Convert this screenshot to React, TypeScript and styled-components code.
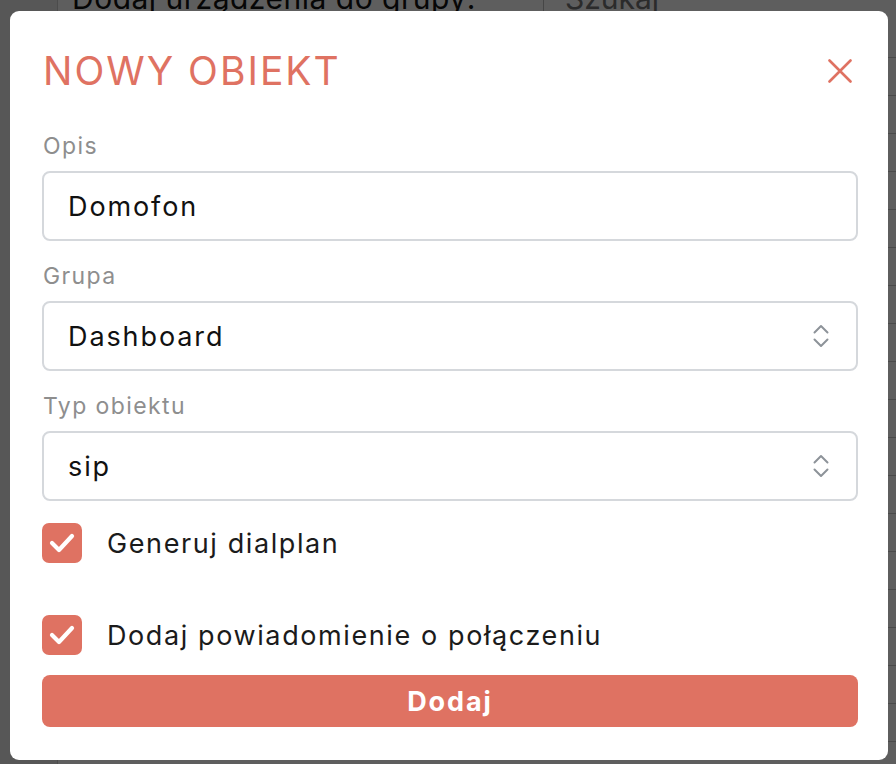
import React from "react";
import styled, { createGlobalStyle } from "styled-components";

const coral = "#df7262";

const GlobalStyle = createGlobalStyle`
  html, body {
    margin: 0;
    padding: 0;
    background: #ffffff;
    font-family: "Inter", "Noto Sans", sans-serif;
    overflow: hidden;
  }

  * {
    box-sizing: border-box;
  }
`;

const Page = styled.div`
  display: flex;
  height: 764px;
  width: 896px;
`;

const Sidebar = styled.div`
  background-color: #ededed;
  border-right: 1px solid #cfcfcf;
  flex: 0 0 58px;
`;

const Main = styled.div`
  display: flex;
  flex: 1;
  flex-direction: column;
`;

const TopBar = styled.div`
  align-items: center;
  display: flex;
  height: 44px;
  margin-top: -24px;
  padding-left: 14px;
`;

const Heading = styled.h2`
  color: #111111;
  font-size: 30px;
  font-weight: 400;
  letter-spacing: 0.5px;
  margin: 0;
  width: 471px;
`;

const Search = styled.input`
  border: none;
  border-left: 1px solid #bdbdbd;
  color: #9a9a9a;
  font-family: inherit;
  font-size: 30px;
  height: 44px;
  padding-left: 21px;
  width: 300px;
`;

const Table = styled.div`
  display: flex;
  flex-direction: column;
`;

const TableRow = styled.div`
  border-bottom: 1px solid #c9c9c9;
  height: 38px;
`;

const Overlay = styled.div`
  background-color: rgba(0, 0, 0, 0.63);
  inset: 0;
  position: fixed;
`;

const Modal = styled.div`
  background-color: #ffffff;
  border-radius: 9px;
  display: flex;
  flex-direction: column;
  margin: 11px 0 0 10px;
  padding: 32px 30px 33px 32px;
  width: 878px;
`;

const Header = styled.div`
  align-items: center;
  display: flex;
  height: 55px;
  justify-content: space-between;
`;

const Title = styled.h1`
  color: ${coral};
  font-size: 39px;
  font-weight: 400;
  letter-spacing: 2px;
  margin: 0 0 0 1px;
`;

const CloseButton = styled.button`
  align-items: center;
  background: none;
  border: none;
  cursor: pointer;
  display: flex;
  height: 29px;
  justify-content: center;
  margin-right: 4px;
  padding: 0;
  width: 29px;
`;

const Fields = styled.div`
  display: flex;
  flex-direction: column;
  gap: 20px;
  margin-top: 33px;
`;

const Field = styled.label`
  display: flex;
  flex-direction: column;
  gap: 10px;
`;

const FieldLabel = styled.span`
  color: #8e8e8e;
  font-size: 23px;
  letter-spacing: 1.4px;
  line-height: 30px;
  padding-left: 1px;
`;

const TextInput = styled.input`
  border: 2px solid #d5d8dc;
  border-radius: 8px;
  color: #111111;
  font-family: inherit;
  font-size: 27px;
  height: 70px;
  letter-spacing: 1.9px;
  outline: none;
  padding: 0 24px;
  width: 100%;
`;

const SelectBox = styled.div`
  align-items: center;
  border: 2px solid #d5d8dc;
  border-radius: 8px;
  display: flex;
  height: 70px;
  padding: 0 27px 0 24px;
`;

const NativeSelect = styled.select`
  appearance: none;
  background: transparent;
  border: none;
  color: #111111;
  flex: 1;
  font-family: inherit;
  font-size: 27px;
  letter-spacing: 1.9px;
  outline: none;
  padding: 0;
`;

const Checks = styled.div`
  display: flex;
  flex-direction: column;
  gap: 52px;
  margin-top: 22px;
`;

const CheckRow = styled.label`
  align-items: center;
  display: flex;
  gap: 25px;
  height: 40px;
`;

const CheckBox = styled.span<{ checked: boolean }>`
  align-items: center;
  background-color: ${props => (props.checked ? coral : "#ffffff")};
  border: ${props => (props.checked ? "none" : "2px solid #d5d8dc")};
  border-radius: 7px;
  display: flex;
  flex: 0 0 40px;
  height: 40px;
  justify-content: center;
`;

const CheckText = styled.span`
  color: #1b1b1b;
  font-size: 27px;
  letter-spacing: 1.6px;
`;

const SubmitButton = styled.button`
  background-color: ${coral};
  border: none;
  border-radius: 8px;
  color: #ffffff;
  cursor: pointer;
  font-family: inherit;
  font-size: 27px;
  font-weight: 700;
  height: 52px;
  letter-spacing: 1.9px;
  margin-top: 20px;
  width: 100%;
`;

const CloseIcon = () => (
  <svg width="24" height="24" viewBox="0 0 24 24" fill="none">
    <path
      d="M1.5 1.5 L22.5 22.5 M22.5 1.5 L1.5 22.5"
      stroke={coral}
      strokeWidth={2.6}
      strokeLinecap="round"
    />
  </svg>
);

const ChevronIcon = () => (
  <svg width="16" height="24" viewBox="0 0 16 24" fill="none">
    <path
      d="M1.5 8.5 L8 2 L14.5 8.5 M1.5 15.5 L8 22 L14.5 15.5"
      stroke="#8d9399"
      strokeWidth={2}
      strokeLinecap="round"
      strokeLinejoin="round"
    />
  </svg>
);

const CheckIcon = () => (
  <svg width="40" height="40" viewBox="0 0 40 40" fill="none">
    <path
      d="M10 20 L17 27 L30 13"
      stroke="#ffffff"
      strokeWidth={4.2}
      strokeLinecap="round"
      strokeLinejoin="round"
    />
  </svg>
);

const Check = ({ label }: { label: string }) => (
  <CheckRow>
    <CheckBox checked>
      <CheckIcon />
    </CheckBox>
    <CheckText>{label}</CheckText>
  </CheckRow>
);

const App = () => {
  return (
    <>
      <GlobalStyle />
      <Page>
        <Sidebar />
        <Main>
          <TopBar>
            <Heading>Dodaj urządzenia do grupy:</Heading>
            <Search placeholder="Szukaj" />
          </TopBar>
          <Table>
            {Array.from({ length: 20 }, (_, i) => (
              <TableRow key={i} />
            ))}
          </Table>
        </Main>
      </Page>
      <Overlay>
        <Modal>
          <Header>
            <Title>NOWY OBIEKT</Title>
            <CloseButton aria-label="Zamknij">
              <CloseIcon />
            </CloseButton>
          </Header>
          <Fields>
            <Field>
              <FieldLabel>Opis</FieldLabel>
              <TextInput defaultValue="Domofon" />
            </Field>
            <Field>
              <FieldLabel>Grupa</FieldLabel>
              <SelectBox>
                <NativeSelect defaultValue="Dashboard">
                  <option>Dashboard</option>
                </NativeSelect>
                <ChevronIcon />
              </SelectBox>
            </Field>
            <Field>
              <FieldLabel>Typ obiektu</FieldLabel>
              <SelectBox>
                <NativeSelect defaultValue="sip">
                  <option>sip</option>
                </NativeSelect>
                <ChevronIcon />
              </SelectBox>
            </Field>
          </Fields>
          <Checks>
            <Check label="Generuj dialplan" />
            <Check label="Dodaj powiadomienie o połączeniu" />
          </Checks>
          <SubmitButton>Dodaj</SubmitButton>
        </Modal>
      </Overlay>
    </>
  );
};

export default App;
